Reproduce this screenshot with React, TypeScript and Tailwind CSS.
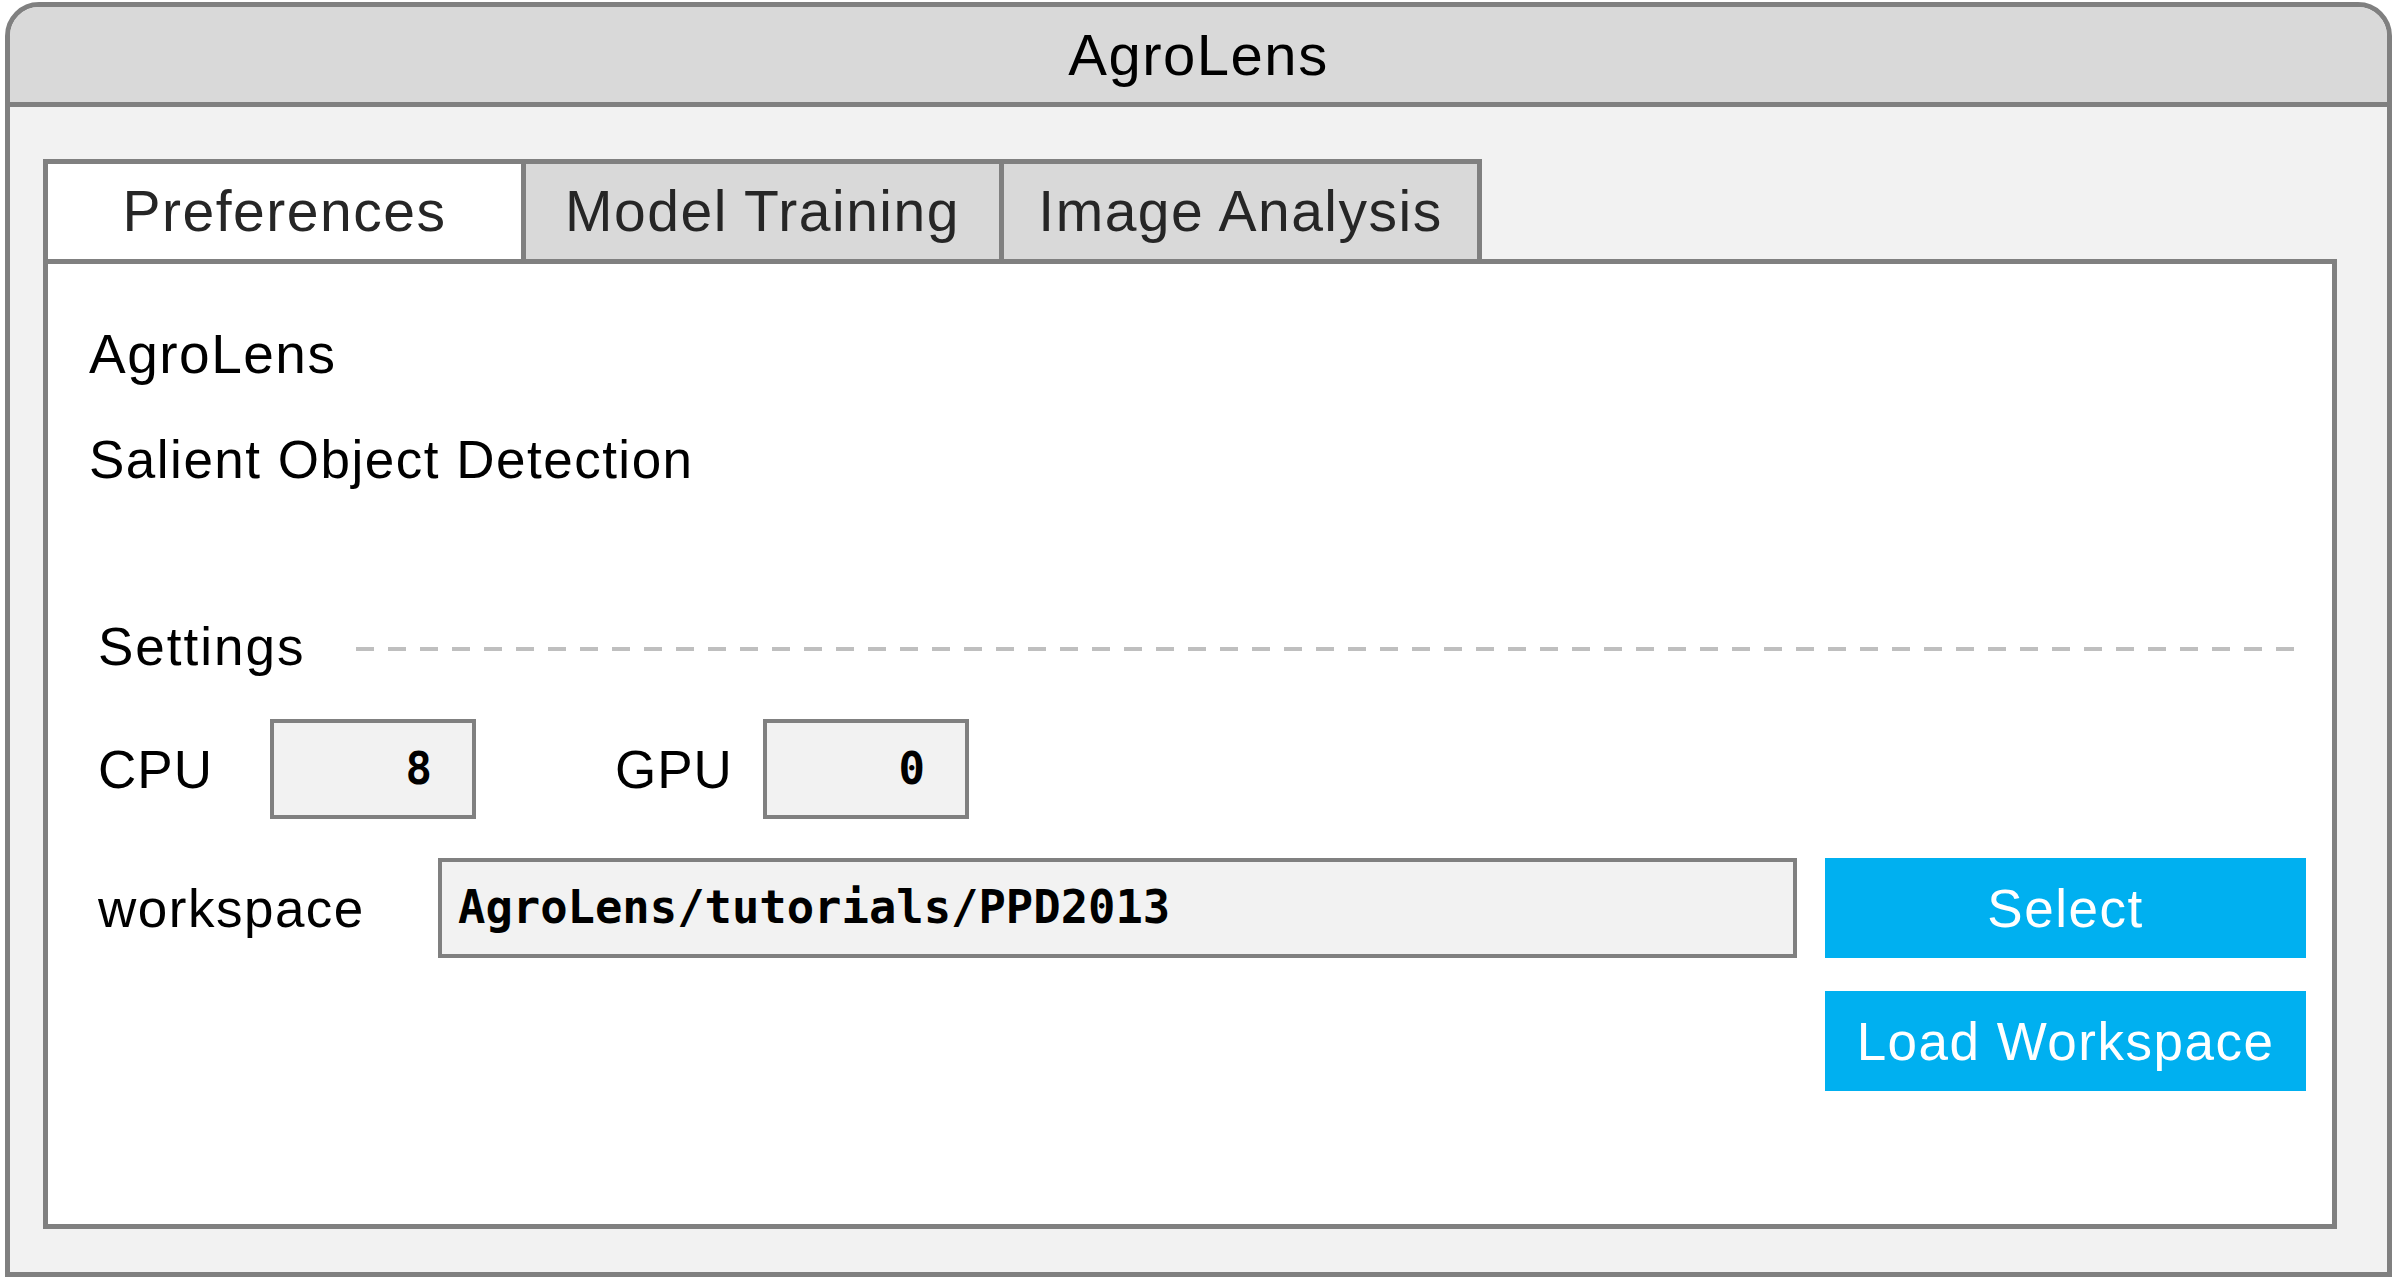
import React from 'react';

const sans = "font-['Liberation_Sans',Arial,sans-serif]";
const mono = "font-['DejaVu_Sans_Mono','Liberation_Mono',monospace]";

interface TabProps {
  label: string;
  active?: boolean;
  first?: boolean;
}

const Tab: React.FC<TabProps> = ({ label, active, first }) => {
  return (
    <div
      className={`flex h-[100px] w-[483px] items-center justify-center border-x-[5px] border-t-[5px] border-[#808080] ${
        first ? '' : '-ml-[5px]'
      } ${active ? 'bg-white' : 'bg-[#d9d9d9]'}`}
    >
      <span className="text-[57px] leading-none tracking-[1.5px] text-[#262626]">{label}</span>
    </div>
  );
};

const NumberBox: React.FC<{ value: string }> = ({ value }) => {
  return (
    <div className="flex h-[100px] w-[206px] items-center justify-end border-[4px] border-[#808080] bg-[#f2f2f2] pr-[40px]">
      <span className={`${mono} text-[44px] font-bold leading-none text-black`}>{value}</span>
    </div>
  );
};

const BlueButton: React.FC<{ label: string }> = ({ label }) => {
  return (
    <button className="flex h-[100px] w-[481px] items-center justify-center bg-[#00b0f0] text-[53px] leading-none tracking-[1.5px] text-white">
      {label}
    </button>
  );
};

const App: React.FC = () => {
  const tabs = ['Preferences', 'Model Training', 'Image Analysis'];

  return (
    <div className={`${sans} h-[1278px] w-[2392px] bg-white pl-[5px] pt-[2px]`}>
      <div className="flex h-[1275px] w-[2387px] flex-col overflow-hidden rounded-t-[34px] border-[5px] border-[#808080] bg-[#f2f2f2]">
        {/* title bar */}
        <div className="flex h-[100px] shrink-0 items-center justify-center border-b-[5px] border-[#808080] bg-[#d9d9d9]">
          <span className="text-[58px] leading-none tracking-[1.5px] text-black">AgroLens</span>
        </div>

        <div className="flex flex-1 flex-col pb-[43px] pl-[33px] pr-[50px] pt-[52px]">
          <div className="flex">
            {tabs.map((t, i) => (
              <Tab key={t} label={t} active={i === 0} first={i === 0} />
            ))}
          </div>

          <div className="flex flex-1 flex-col border-[5px] border-[#808080] bg-white pl-[41px] pr-[26px] pt-[63px]">
            <div className="text-[55px] leading-none tracking-[1.5px] text-black">AgroLens</div>
            <div className="mt-[51px] text-[53px] leading-none tracking-[1.5px] text-black">
              Salient Object Detection
            </div>

            <div className="mt-[134px] pl-[9px]">
              <div className="flex items-center">
                <span className="text-[53px] leading-none tracking-[2px] text-black">Settings</span>
                <div className="ml-[50px] mr-[4px] mt-[4px] h-[4px] flex-1 bg-[repeating-linear-gradient(to_right,#bfbfbf_0px,#bfbfbf_18px,transparent_18px,transparent_32px)]" />
              </div>

              <div className="mt-[46px] flex items-center">
                <span className="w-[172px] text-[53px] leading-none tracking-[1px] text-black">CPU</span>
                <NumberBox value="8" />
                <span className="ml-[139px] w-[148px] text-[53px] leading-none tracking-[1px] text-black">GPU</span>
                <NumberBox value="0" />
              </div>

              <div className="mt-[39px] flex items-center">
                <span className="w-[340px] shrink-0 text-[53px] leading-none tracking-[1.5px] text-black">workspace</span>
                <div className="flex h-[100px] flex-1 items-center border-[4px] border-[#808080] bg-[#f2f2f2] pl-[16px]">
                  <span className={`${mono} text-[45.5px] font-bold leading-none text-black`}>
                    AgroLens/tutorials/PPD2013
                  </span>
                </div>
                <div className="ml-[28px]">
                  <BlueButton label="Select" />
                </div>
              </div>

              <div className="mt-[33px] flex justify-end">
                <BlueButton label="Load Workspace" />
              </div>
            </div>
          </div>
        </div>
      </div>
    </div>
  );
};

export default App;
